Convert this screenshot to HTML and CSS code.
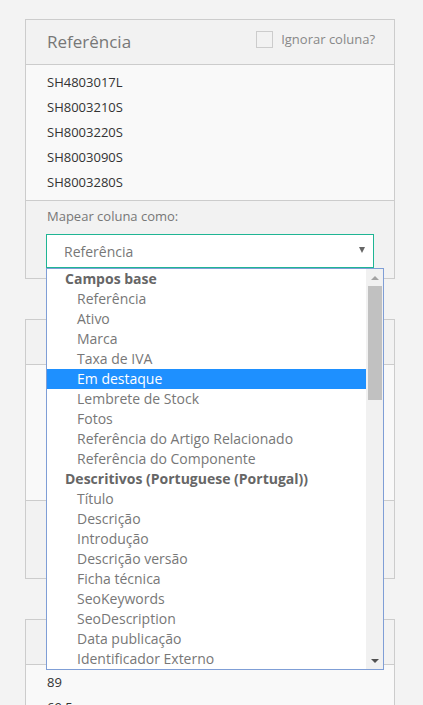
FILE: index.html
```html
<!DOCTYPE html>
<html lang="pt">
<head>
<meta charset="utf-8">
<title>Mapear colunas</title>
<link rel="stylesheet" href="styles.css">
</head>
<body>
<div class="page">
  <section class="panel">
    <header class="panel-head">
      <h2 class="panel-title">Referência</h2>
      <label class="ignore"><span class="checkbox"></span><span>Ignorar coluna?</span></label>
    </header>
    <div class="panel-body">
      <div class="row">SH4803017L</div>
      <div class="row">SH8003210S</div>
      <div class="row">SH8003220S</div>
      <div class="row">SH8003090S</div>
      <div class="row">SH8003280S</div>
    </div>
    <div class="panel-foot">
      <div class="map-label">Mapear coluna como:</div>
      <div class="select-wrap">
        <div class="select open">
          <span class="select-value">Referência</span>
          <span class="select-arrow"></span>
        </div>
        <div class="dropdown">
          <div class="options">
            <div class="group">Campos base</div>
            <div class="opt">Referência</div>
            <div class="opt">Ativo</div>
            <div class="opt">Marca</div>
            <div class="opt">Taxa de IVA</div>
            <div class="opt hl">Em destaque</div>
            <div class="opt">Lembrete de Stock</div>
            <div class="opt">Fotos</div>
            <div class="opt">Referência do Artigo Relacionado</div>
            <div class="opt">Referência do Componente</div>
            <div class="group">Descritivos (Portuguese (Portugal))</div>
            <div class="opt">Título</div>
            <div class="opt">Descrição</div>
            <div class="opt">Introdução</div>
            <div class="opt">Descrição versão</div>
            <div class="opt">Ficha técnica</div>
            <div class="opt">SeoKeywords</div>
            <div class="opt">SeoDescription</div>
            <div class="opt">Data publicação</div>
            <div class="opt">Identificador Externo</div>
          </div>
          <div class="scrollbar">
            <div class="sb-btn"><span class="tri-up"></span></div>
            <div class="sb-track"><div class="sb-thumb"></div></div>
            <div class="sb-btn"><span class="tri-down"></span></div>
          </div>
        </div>
      </div>
    </div>
  </section>

  <section class="panel">
    <header class="panel-head">
      <h2 class="panel-title">Ativo</h2>
      <label class="ignore"><span class="checkbox"></span><span>Ignorar coluna?</span></label>
    </header>
    <div class="panel-body">
      <div class="row">1</div>
      <div class="row">1</div>
      <div class="row">1</div>
      <div class="row">1</div>
      <div class="row">1</div>
    </div>
    <div class="panel-foot">
      <div class="map-label">Mapear coluna como:</div>
      <div class="select-wrap">
        <div class="select">
          <span class="select-value">Ativo</span>
          <span class="select-arrow"></span>
        </div>
      </div>
    </div>
  </section>

  <section class="panel">
    <header class="panel-head">
      <h2 class="panel-title">Preço</h2>
      <label class="ignore"><span class="checkbox"></span><span>Ignorar coluna?</span></label>
    </header>
    <div class="panel-body">
      <div class="row">89</div>
      <div class="row">69.5</div>
      <div class="row">72</div>
      <div class="row">45</div>
      <div class="row">99</div>
    </div>
  </section>
</div>
</body>
</html>
```
FILE: styles.css
```css
* { box-sizing: border-box; }

html, body {
  margin: 0;
  padding: 0;
  background: #f3f3f3;
  font-family: "Open Sans", "Liberation Sans", sans-serif;
  color: #333;
}

.page {
  padding: 19px 0 0 25px;
  display: flex;
  flex-direction: column;
  gap: 40px;
  width: 395px;
}

.panel {
  width: 370px;
  border: 1px solid #cccccc;
  background: #f2f2f2;
}

.panel-head {
  height: 45px;
  border-bottom: 1px solid #cccccc;
  display: flex;
  justify-content: space-between;
  align-items: flex-start;
  padding: 0 19px 0 21px;
}

.panel-title {
  margin: 0;
  font-size: 17px;
  font-weight: 400;
  color: #777;
  line-height: 44px;
}

.ignore {
  display: flex;
  align-items: center;
  gap: 8px;
  margin-top: 10px;
  font-size: 13px;
  color: #888;
  line-height: 18px;
}

.checkbox {
  width: 17px;
  height: 17px;
  border: 1px solid #cccccc;
  background: #f2f2f2;
}

.panel-body {
  background: #f9f9f9;
  border-bottom: 1px solid #cccccc;
  padding: 5px 21px;
  height: 136px;
}

.row {
  height: 25px;
  line-height: 25px;
  font-size: 13px;
  color: #333;
}

.panel-foot {
  padding: 5px 20px 10px 20px;
  height: 77px;
}

.map-label {
  font-size: 13px;
  line-height: 20px;
  color: #777;
  padding-left: 1px;
  margin-bottom: 8px;
}

.select-wrap {
  position: relative;
  width: 328px;
}

.select {
  height: 34px;
  border: 1px solid #cccccc;
  background: #fff;
  display: flex;
  align-items: center;
  justify-content: space-between;
  padding: 0 8px 0 17px;
}

.select.open {
  border-color: #1fb594;
}

.select-value {
  font-size: 14px;
  color: #777;
}

.select-arrow {
  width: 0;
  height: 0;
  border-left: 3.5px solid transparent;
  border-right: 3.5px solid transparent;
  border-top: 6px solid #666;
  margin-top: -2px;
}

.dropdown {
  position: absolute;
  left: 0;
  top: 34px;
  width: 338px;
  height: 402px;
  border: 1px solid #7f9ed6;
  background: #fff;
  display: flex;
  z-index: 10;
}

.options {
  flex: 1;
  display: flex;
  flex-direction: column;
}

.group, .opt {
  height: 20px;
  line-height: 20px;
  font-size: 14px;
  white-space: nowrap;
}

.group {
  font-weight: 700;
  color: #666;
  padding-left: 18px;
}

.opt {
  color: #777;
  padding-left: 30px;
}

.opt.hl {
  background: #1e90ff;
  color: #fff;
}

.scrollbar {
  width: 17px;
  background: #f1f1f1;
  display: flex;
  flex-direction: column;
}

.sb-btn {
  height: 17px;
  display: flex;
  align-items: center;
  justify-content: center;
}

.tri-up {
  width: 0;
  height: 0;
  border-left: 4px solid transparent;
  border-right: 4px solid transparent;
  border-bottom: 4px solid #a3a3a3;
}

.tri-down {
  width: 0;
  height: 0;
  border-left: 4px solid transparent;
  border-right: 4px solid transparent;
  border-top: 4px solid #505050;
}

.sb-track {
  flex: 1;
  padding: 0 1px 0 2px;
}

.sb-thumb {
  height: 114px;
  background: #c1c1c1;
}
```
